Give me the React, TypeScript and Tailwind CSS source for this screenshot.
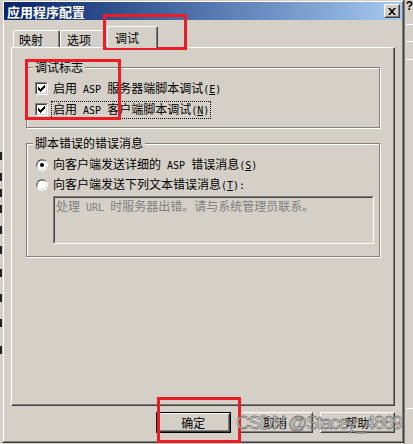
import type { ReactNode } from "react";

const cjk = "font-['Noto_Sans_CJK_SC',sans-serif]";

// half-width latin runs, like the SimSun ascii glyphs
const M = ({ children }: { children: ReactNode }) => (
  <span className="whitespace-pre font-['DejaVu_Sans_Mono',monospace] text-[10px]">{children}</span>
);

const Checkbox = () => (
  <div className="h-[13px] w-[13px] border border-t-[#808080] border-l-[#808080] border-r-white border-b-white">
    <div className="flex h-full w-full items-center justify-center border border-t-[#404040] border-l-[#404040] border-r-[#d4d0c8] border-b-[#d4d0c8] bg-white">
      <svg width="7" height="7" viewBox="0 0 7 7">
        <path d="M0 2h1v1h1v1h1v-1h1v-1h1v-1h1v-1h1v3h-1v1h-1v1h-1v1h-1v1h-1v-1h-1v-1h-1z" fill="#000" />
      </svg>
    </div>
  </div>
);

const Radio = ({ on }: { on?: boolean }) => (
  <svg width="12" height="12" viewBox="0 0 12 12">
    <path d="M4 0h4v1h2v1h-6v1h-2v2h-1v3h-1v-4h1v-2h1v-1h2z" fill="#808080" />
    <path d="M4 1h4v1h-4v1h-1v1h-1v3h-1v-3h1v-2h1v-1h1z" fill="#404040" />
    <circle cx="6" cy="6" r="4.6" fill="#fff" />
    <path d="M10 3h1v1h1v4h-1v2h-1v1h-2v1h-4v-1h-2v-1h2v1h4v-1h2v-1h1v-4h-1z" fill="#fff" />
    {on && <circle cx="6" cy="6" r="2" fill="#000" />}
  </svg>
);

const Group = ({ label, className, children }: { label: string; className: string; children: ReactNode }) => (
  <div
    className={`relative border border-[#808080] shadow-[1px_1px_0_#fff,inset_1px_1px_0_#fff] ${className}`}
  >
    <span className="absolute -top-[7px] left-[6px] bg-[#d4d0c8] px-[2px] text-[12px] leading-[12px]">{label}</span>
    {children}
  </div>
);

const Button = ({ label, def }: { label: string; def?: boolean }) => (
  <div className={`h-[21px] w-[75px] ${def ? "border border-black" : ""}`}>
    <div className="h-full w-full border border-t-white border-l-white border-r-[#404040] border-b-[#404040]">
      <div className="flex h-full w-full items-center justify-center border border-t-[#d4d0c8] border-l-[#d4d0c8] border-r-[#808080] border-b-[#808080] text-[12px] leading-[12px]">
        {label}
      </div>
    </div>
  </div>
);

export default function App() {
  return (
    <div className={`relative flex h-[444px] w-[413px] overflow-hidden bg-[#d4d0c8] text-black ${cjk}`}>
      {/* bits of the window behind, left */}
      <div className="flex w-[2px] flex-col">
        {[152, 13, 8, 8, 13, 12, 15, 17, 17, 19].map((m, i) => (
          <div key={i} className="h-[8px] w-[2px] bg-[#222]" style={{ marginTop: m }} />
        ))}
      </div>

      {/* dialog */}
      <div className="flex h-[443px] w-[405px] flex-col border border-t-[#d4d0c8] border-l-[#d4d0c8] border-r-[#404040] border-b-[#404040]">
        <div className="flex flex-1 flex-col border border-t-white border-l-white border-r-[#808080] border-b-[#808080]">
          {/* title bar */}
          <div className="flex h-[18px] items-center justify-between bg-gradient-to-r from-[#0a246a] to-[#a6caf0] pl-[3px] pr-[2px]">
            <span className="text-[13px] leading-[13px] font-bold tracking-[0px] text-white">应用程序配置</span>
            <div className="h-[14px] w-[16px] border border-t-white border-l-white border-r-[#404040] border-b-[#404040] bg-[#d4d0c8]">
              <div className="flex h-full w-full items-center justify-center border border-t-[#d4d0c8] border-l-[#d4d0c8] border-r-[#808080] border-b-[#808080]">
                <svg width="8" height="7" viewBox="0 0 8 7">
                  <path d="M0 0h2l2 2.2L6 0h2L5 3.5 8 7H6L4 4.8 2 7H0l3-3.5z" fill="#000" />
                </svg>
              </div>
            </div>
          </div>

          <div className="flex flex-1 flex-col px-[7px] pt-[6px]">
            {/* tabs */}
            <div className="flex h-[21px] items-end pl-[2px] text-[12px] leading-[12px]">
              <div className="h-[17px] w-[47px] rounded-t-[2px] border border-b-0 border-t-white border-l-white border-r-[#404040] pl-[5px] pt-[3px] shadow-[inset_-1px_0_0_#808080]">
                映射
              </div>
              <div className="h-[17px] w-[46px] rounded-t-[2px] border border-b-0 border-t-white border-l-white border-r-[#404040] pl-[6px] pt-[3px] shadow-[inset_-1px_0_0_#808080]">
                选项
              </div>
              <div className="relative z-10 -mb-px ml-[1px] h-[22px] w-[51px] rounded-t-[2px] border border-b-0 border-t-white border-l-white border-r-[#404040] bg-[#d4d0c8] pl-[7px] pt-[5px] shadow-[inset_-1px_0_0_#808080]">
                调试
              </div>
            </div>

            {/* panel */}
            <div className="h-[359px] border border-t-white border-l-white border-r-[#404040] border-b-[#404040] px-[14px] pt-[19px] shadow-[inset_-1px_-1px_0_#808080]">
              <Group label="调试标志" className="flex flex-col gap-[6px] pl-[8px] pt-[13px] pb-[10px]">
                <div className="flex h-[15px] items-center text-[12px] leading-[12px]">
                  <Checkbox />
                  <span className="ml-[3px] border border-transparent px-[1px] py-[1px]">
                    启用<M> ASP </M>服务器端脚本调试<M>(<u>E</u>)</M>
                  </span>
                </div>
                <div className="flex h-[15px] items-center text-[12px] leading-[12px]">
                  <Checkbox />
                  <span className="ml-[3px] border border-dotted border-black px-[1px] py-[1px]">
                    启用<M> ASP </M>客户端脚本调试<M>(<u>N</u>)</M>
                  </span>
                </div>
              </Group>

              <Group label="脚本错误的错误消息" className="mt-[15px] flex flex-col pl-[9px] pt-[13px] pb-[12px]">
                <div className="flex h-[15px] items-center text-[12px] leading-[12px]">
                  <Radio on />
                  <span className="ml-[3px] border border-transparent px-[1px]">
                    向客户端发送详细的<M> ASP </M>错误消息<M>(<u>S</u>)</M>
                  </span>
                </div>
                <div className="mt-[5px] flex h-[15px] items-center text-[12px] leading-[12px]">
                  <Radio />
                  <span className="ml-[3px] border border-transparent px-[1px]">
                    向客户端发送下列文本错误消息<M>(<u>T</u>):</M>
                  </span>
                </div>
                <div className="ml-[17px] mt-[4px] h-[48px] w-[321px] border border-t-[#808080] border-l-[#808080] border-r-white border-b-white">
                  <div className="h-full w-full border border-t-[#404040] border-l-[#404040] border-r-[#d4d0c8] border-b-[#d4d0c8] px-[1px] pt-[2px] text-[12px] leading-[12px] text-[#808080]">
                    处理<M> URL </M>时服务器出错。请与系统管理员联系。
                  </div>
                </div>
              </Group>
            </div>

            {/* buttons */}
            <div className="mt-[6px] flex justify-end gap-[7px] pr-0">
              <Button label="确定" def />
              <Button label="取消" />
              <Button label="帮助" />
            </div>
          </div>
        </div>
      </div>

      {/* window behind, right */}
      <div className="flex flex-1 flex-col border-l border-[#808080] pl-[1px]">
        <span className="font-['Liberation_Sans',sans-serif] text-[12px] leading-[12px] font-bold">?</span>
        <div className="mt-[12px] h-px w-full bg-white" />
        <div className="mt-[16px] h-px w-full bg-white" />
        <div className="mt-[17px] h-px w-full bg-white" />
        <div className="mt-[348px] h-px w-full bg-white" />
      </div>

      {/* annotations */}
      <div className="pointer-events-none absolute left-[103px] top-[14px] h-[36px] w-[84px] border-[3px] border-[#ed1c24]" />
      <div className="pointer-events-none absolute left-[25px] top-[59px] h-[61px] w-[96px] border-[3px] border-[#ed1c24]" />
      <div className="pointer-events-none absolute left-[157px] top-[397px] h-[46px] w-[84px] border-[3px] border-[#ed1c24]" />

      {/* watermark */}
      <span className="pointer-events-none absolute left-[236px] top-[412px] font-['Liberation_Sans',sans-serif] text-[19px] leading-[21px] tracking-[-1.4px] text-white/70 [-webkit-text-stroke:0.8px_rgba(80,80,80,0.75)]">
        CSDN @Stacey_4869
      </span>
    </div>
  );
}
